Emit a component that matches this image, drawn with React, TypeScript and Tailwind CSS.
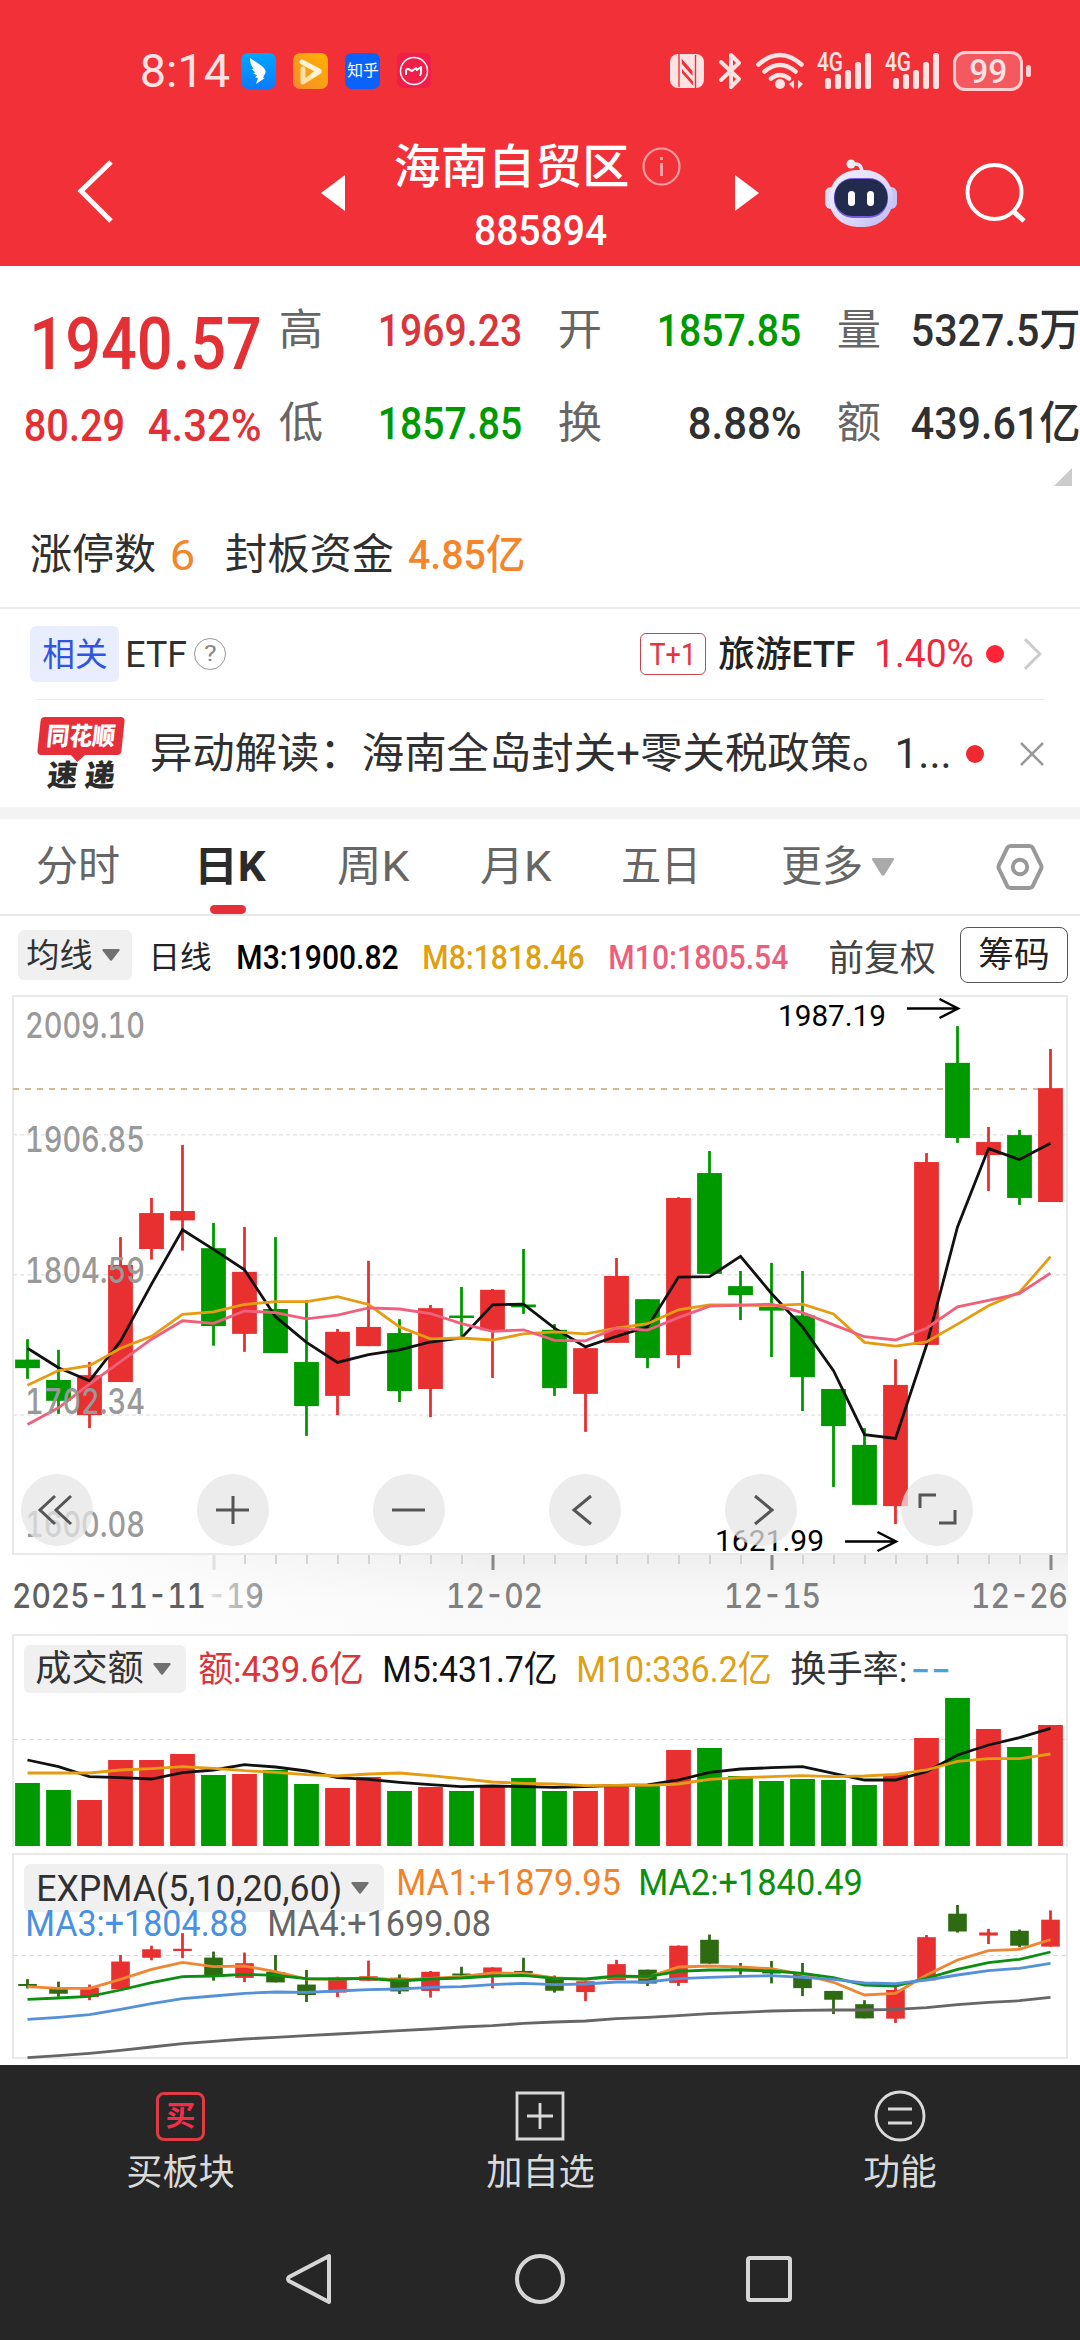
import React, { useLayoutEffect, useRef, useState } from 'react';
import clsx from 'clsx';

const RED = '#e83030';
const GREEN = '#009900';

// [high, body top, body bottom, low, is rising], measured down from the plot origin
type Candle = [number, number, number, number, boolean];

const candles: Candle[] = [
  [880, 930, 951, 977, false],
  [906, 980, 1031, 1063, false],
  [936, 968, 1066, 1098, true],
  [630, 698, 985, 985, true],
  [534, 571, 659, 685, true],
  [404, 566, 589, 663, true],
  [595, 657, 848, 896, false],
  [605, 715, 867, 911, true],
  [630, 806, 914, 914, false],
  [785, 936, 1044, 1117, false],
  [855, 862, 1019, 1066, true],
  [688, 850, 897, 897, true],
  [831, 865, 1007, 1034, false],
  [796, 804, 1002, 1071, true],
  [752, 822, 828, 873, false],
  [757, 759, 858, 975, true],
  [659, 795, 802, 818, false],
  [843, 857, 1000, 1019, false],
  [902, 902, 1014, 1107, true],
  [681, 725, 889, 889, true],
  [782, 782, 926, 951, false],
  [532, 534, 919, 951, true],
  [419, 473, 720, 720, false],
  [713, 750, 772, 833, false],
  [693, 801, 810, 924, false],
  [713, 822, 973, 1056, false],
  [1002, 1002, 1093, 1242, false],
  [1098, 1139, 1286, 1286, false],
  [929, 992, 1289, 1333, true],
  [424, 446, 894, 894, true],
  [113, 203, 387, 399, false],
  [360, 397, 429, 517, true],
  [367, 380, 534, 551, false],
  [169, 265, 544, 544, true],
];

const ma3 = [902, 950, 982, 885, 745, 612, 660, 710, 825, 888, 937, 918, 906, 887, 877, 796, 794, 853, 899, 873, 850, 728, 727, 677, 768, 850, 957, 1114, 1123, 895, 605, 413, 440, 400];
const ma8 = [993, 957, 945, 902, 873, 819, 813, 795, 788, 788, 776, 795, 850, 879, 877, 882, 867, 862, 867, 853, 842, 808, 796, 796, 798, 794, 818, 888, 897, 887, 843, 798, 765, 678];
const ma10 = [1089, 1048, 990, 935, 880, 835, 841, 811, 815, 830, 821, 803, 806, 817, 842, 861, 857, 883, 884, 852, 858, 827, 799, 797, 794, 815, 845, 874, 882, 853, 801, 785, 768, 718];

const volumes = [489, 510, 540, 420, 420, 402, 465, 462, 450, 492, 504, 471, 513, 501, 513, 500, 474, 513, 513, 493, 495, 390, 384, 468, 483, 477, 480, 495, 462, 354, 234, 327, 381, 315];
const vol5 = [420, 440, 470, 473, 477, 458, 450, 434, 441, 453, 473, 478, 487, 494, 500, 498, 500, 502, 500, 496, 495, 480, 457, 447, 443, 440, 460, 480, 480, 455, 405, 375, 353, 325];
const vol10 = [459, 459, 459, 450, 446, 440, 445, 452, 457, 464, 468, 462, 459, 467, 476, 486, 490, 492, 497, 496, 496, 492, 478, 473, 470, 467, 470, 468, 463, 450, 424, 416, 416, 402];

const exp5 = [1100, 1105, 1105, 1078, 1048, 1027, 1040, 1038, 1055, 1077, 1077, 1074, 1080, 1075, 1070, 1059, 1060, 1074, 1078, 1070, 1072, 1041, 1038, 1041, 1046, 1063, 1087, 1125, 1120, 1065, 1020, 992, 988, 959];
const exp10 = [1138, 1134, 1129, 1110, 1088, 1070, 1068, 1063, 1066, 1076, 1077, 1075, 1083, 1077, 1074, 1068, 1066, 1075, 1077, 1068, 1070, 1054, 1050, 1050, 1053, 1060, 1073, 1095, 1098, 1075, 1048, 1028, 1018, 996];
const exp20 = [1198, 1192, 1184, 1168, 1151, 1136, 1128, 1120, 1116, 1117, 1113, 1109, 1107, 1102, 1100, 1094, 1090, 1094, 1092, 1086, 1086, 1076, 1072, 1069, 1067, 1072, 1078, 1089, 1091, 1080, 1065, 1052, 1045, 1030];
const exp60 = [1313, 1307, 1300, 1291, 1281, 1271, 1264, 1257, 1252, 1247, 1242, 1237, 1232, 1227, 1221, 1217, 1210, 1206, 1203, 1196, 1192, 1187, 1181, 1177, 1173, 1171, 1170, 1170, 1168, 1163, 1154, 1147, 1142, 1132];

const slotX = (i: number) => 27.5 + i * 31;
const priceY = (v: number) => 980 + v / 2.45;
const lowerY = (v: number) => 1620 + v / 3;
const miniY = (v: number) => lowerY(822.2 + v * 0.29);

const points = (values: number[], scale: (v: number) => number) =>
  values.map((v, i) => `${slotX(i)},${scale(v).toFixed(1)}`).join(' ');

// Squeezes or stretches one line of text so that its ink fills `w` pixels
function Fit({ w, className, children }: { w: number; className?: string; children: string }) {
  const ref = useRef<HTMLSpanElement>(null);
  const [fit, setFit] = useState({ scale: 1, inset: 0 });

  useLayoutEffect(() => {
    const el = ref.current;
    if (!el) return;
    const inset = parseFloat(getComputedStyle(el).fontSize) * 0.05;
    setFit({ scale: (w + inset * 2) / el.offsetWidth, inset });
  }, [w, children]);

  return (
    <span className={clsx('block shrink-0 whitespace-nowrap leading-none', className)} style={{ width: w }}>
      <span
        ref={ref}
        className="inline-block origin-left"
        style={{ transform: `translateX(${-fit.inset}px) scaleX(${fit.scale})` }}
      >
        {children}
      </span>
    </span>
  );
}

function Caret({ className }: { className?: string }) {
  return (
    <svg viewBox="0 0 18 12" className={clsx('h-3 w-[18px] shrink-0', className)} fill="currentColor">
      <path d="M1 0h16q1 .6.5 1.5L10 11.3q-1 1-2 0L.5 1.500Q0 .6 1 0z" />
    </svg>
  );
}

function Signal() {
  return (
    <svg viewBox="0 0 54 44" className="h-11 w-[54px] shrink-0">
      <text x="0" y="22" className="font-medium" fontSize="25" textLength="26" lengthAdjust="spacingAndGlyphs" fill="#ffe3e3">4G</text>
      {[29, 25, 21, 13, 4].map((top, i) => (
        <rect key={top} x={8 + i * 10} y={top} width="6" height={40 - top} rx="2.500" fill="#ffe3e3" />
      ))}
    </svg>
  );
}

function StatusBar() {
  return (
    <div className="flex h-[141px] items-center text-[#ffe3e3]">
      <Fit w={86} className="ml-[142px] text-[47px]">8:14</Fit>
      <div className="ml-[13px] flex gap-[17px]">
        <svg viewBox="0 0 35 36" className="h-9 w-[35px]">
          <defs>
            <linearGradient id="ding" x1="0" y1="0" x2="0" y2="1">
              <stop offset="0" stopColor="#00a6ff" />
              <stop offset="1" stopColor="#0a7bff" />
            </linearGradient>
          </defs>
          <rect width="35" height="36" rx="7" fill="url(#ding)" />
          <path d="M9 5c4 3 10 6 13 9 2 2 3 4 2.500 5.500L22 25l1.500.3-8.500 5.700 2-6-3-.5 2-2-4-2.500 2.500-.5-4-3.500 2-.3C10 12.500 9 9 9 5z" fill="#fff" />
        </svg>
        <svg viewBox="0 0 35 36" className="h-9 w-[35px]">
          <defs>
            <linearGradient id="play" x1="0" y1="1" x2="1" y2="0">
              <stop offset="0" stopColor="#f58a2c" />
              <stop offset="1" stopColor="#ffb300" />
            </linearGradient>
          </defs>
          <rect width="35" height="36" rx="7" fill="url(#play)" />
          <path d="M10 16v13l16-10" fill="none" stroke="#ffe2a6" strokeWidth="5" strokeLinecap="round" strokeLinejoin="round" />
          <path d="M9 9l17 9-6 4" fill="none" stroke="#fff3d6" strokeWidth="5" strokeLinecap="round" strokeLinejoin="round" />
        </svg>
        <div className="flex h-9 w-[35px] items-center justify-center rounded-[7px] bg-[#0a62fb] text-white">
          <Fit w={30} className="text-[16px]">知乎</Fit>
        </div>
        <svg viewBox="0 0 35 36" className="h-9 w-[35px]">
          <rect width="34" height="35" rx="6" fill="#f01e48" />
          <circle cx="17" cy="18" r="13.500" fill="none" stroke="#fff" strokeWidth="1.500" />
          <path d="M9 22v-5q2-2 4 0l2 1 4-3 1 2 4-3v6l-1 3" fill="none" stroke="#fff" strokeWidth="2" strokeLinejoin="round" />
        </svg>
      </div>

      <svg viewBox="0 0 34 36" className="ml-[238px] h-9 w-[34px] shrink-0">
        <rect y="1" width="34" height="34" rx="8" fill="#ffe3e3" />
        <path d="M9 1v33M25.500 2v33" fill="none" stroke="#f13038" strokeWidth="1.400" />
        <path d="M11.500 5.500L22.500 18v5L12 11zM12 16l11 12.500v4L12 20z" fill="#f13038" />
      </svg>
      <svg viewBox="0 0 24 38" className="ml-[14px] h-[38px] w-6 shrink-0" fill="none" stroke="#ffe3e3" strokeWidth="4" strokeLinecap="round" strokeLinejoin="round">
        <path d="M3 10l18 17-8 8V3l8 8L3 28" />
      </svg>
      <svg viewBox="0 0 48 38" className="ml-[14px] h-[38px] w-12 shrink-0" fill="none" stroke="#ffe3e3" strokeWidth="4.500" strokeLinecap="round">
        <path d="M2.500 12.500q21.500-19 43 0M8.500 19.500q15.500-13 31 0M15 26.500q9-7 18 0" />
        <circle cx="24" cy="32" r="5" fill="#ffe3e3" stroke="none" />
        <path d="M38 28v9l-5-5zM42 28l5 4-5 5z" fill="#ffe3e3" stroke="none" />
      </svg>
      <div className="ml-[13px] flex gap-[14px]">
        <Signal />
        <Signal />
      </div>
      <div className="ml-[14px] flex h-10 w-[70px] shrink-0 items-center justify-center rounded-[12px] border-[3px] border-[#ffd0d2] bg-[#f4595f]">
        <Fit w={35} className="text-[34px] font-medium">99</Fit>
      </div>
      <div className="ml-[3px] h-3 w-[5px] rounded-full bg-[#ffd0d2]" />
    </div>
  );
}

function Robot() {
  return (
    <svg viewBox="0 0 72 68" className="h-[68px] w-[72px]">
      <defs>
        <linearGradient id="shell" x1="0" y1="0" x2="1" y2="1">
          <stop offset="0" stopColor="#f4f0ff" />
          <stop offset=".6" stopColor="#dcd8fb" />
          <stop offset="1" stopColor="#b9b6f2" />
        </linearGradient>
      </defs>
      <path d="M26 6q10-4 11 7" fill="none" stroke="#e6e4fa" strokeWidth="3.500" />
      <circle cx="26" cy="5" r="4.500" fill="#e6f2f5" />
      <rect x="0" y="28" width="12" height="22" rx="6" fill="#d9dbf3" />
      <rect x="60" y="28" width="12" height="22" rx="6" fill="#c8c5f5" />
      <rect x="4" y="11" width="64" height="57" rx="28" fill="url(#shell)" />
      <rect x="9" y="19" width="54" height="40" rx="19" fill="#7a5ce0" />
      <rect x="9.500" y="20" width="53" height="37" rx="18" fill="#222b4d" />
      <rect x="23" y="32" width="7" height="15" rx="3.500" fill="#fff" />
      <rect x="42" y="32" width="7" height="15" rx="3.500" fill="#fff" />
    </svg>
  );
}

function TitleBar() {
  return (
    <div className="flex h-[125px] items-start text-white">
      <div className="flex h-[103px] items-center">
        <svg viewBox="0 0 42 66" className="ml-[74px] h-[66px] w-[42px]" fill="none" stroke="#fff" strokeWidth="5">
          <path d="M37 2L7 31l30 30" />
        </svg>
        <svg viewBox="0 0 24 36" className="ml-[205px] h-9 w-6" fill="#fff">
          <path d="M24 0v36L0 18z" />
        </svg>
      </div>
      <div className="ml-[51px] w-[285px]">
        <div className="flex h-[50px] items-center gap-[15px]">
          <Fit w={231} className="text-[47px] font-medium">海南自贸区</Fit>
          <svg viewBox="0 0 39 39" className="h-[39px] w-[39px]" fill="none" stroke="#ff9ea2" strokeWidth="2.200">
            <circle cx="19.500" cy="19.500" r="18" />
            <path d="M19.500 16v13M19.500 10v3" strokeWidth="3" />
          </svg>
        </div>
        <Fit w={129} className="mt-[19px] ml-20 text-[42px] font-medium">885894</Fit>
      </div>
      <div className="flex h-[103px] items-center">
        <svg viewBox="0 0 24 36" className="ml-[54px] h-9 w-6" fill="#fff">
          <path d="M0 0v36l24-18z" />
        </svg>
        <div className="ml-[66px]"><Robot /></div>
        <svg viewBox="0 0 64 64" className="ml-[67px] h-16 w-16" fill="none" stroke="#fff" strokeWidth="4">
          <circle cx="30.500" cy="31" r="27" />
          <path d="M49 50l11 10" strokeWidth="5" />
        </svg>
      </div>
    </div>
  );
}

function Stat({ label, value, w, className }: { label: string; value: string; w: number; className: string }) {
  return (
    <div className="flex h-12 items-center justify-between">
      <Fit w={40} className="text-[43px] text-[#666]">{label}</Fit>
      <Fit w={w} className={clsx('text-[45px] font-medium', className)}>{value}</Fit>
    </div>
  );
}

function Quote() {
  return (
    <div className="h-[343px] border-b-2 border-[#ececec] bg-white">
      <div className="flex h-[181px] pl-[26px]">
        <div className="w-[255px] pt-[46px] text-[#e33035]">
          <div className="flex h-16 items-center pl-[7px]">
            <Fit w={225} className="text-[73px] font-medium">1940.57</Fit>
          </div>
          <div className="mt-[27px] flex h-[45px] items-center gap-[27px]">
            <Fit w={97} className="text-[45px] font-medium">80.29</Fit>
            <Fit w={109} className="text-[45px] font-medium">4.32%</Fit>
          </div>
        </div>
        <div className="flex gap-10 pt-10">
          <div className="flex w-[239px] flex-col gap-[45px]">
            <Stat label="高" value="1969.23" w={140} className="text-[#d9363c]" />
            <Stat label="低" value="1857.85" w={140} className="text-[#009900]" />
          </div>
          <div className="flex w-[239px] flex-col gap-[45px]">
            <Stat label="开" value="1857.85" w={140} className="text-[#009900]" />
            <Stat label="换" value="8.88%" w={109} className="text-[#303030]" />
          </div>
          <div className="flex w-[239px] flex-col gap-[45px]">
            <Stat label="量" value="5327.5万" w={165} className="text-[#303030]" />
            <Stat label="额" value="439.61亿" w={165} className="text-[#303030]" />
          </div>
        </div>
      </div>
      <div className="mt-[21px] flex justify-end pr-2">
        <svg viewBox="0 0 18 18" className="h-[18px] w-[18px]" fill="#ccc">
          <path d="M18 0v18H0z" />
        </svg>
      </div>
      <div className="mt-[39px] flex h-[60px] items-center pl-8 text-[42px] text-[#303030]">
        <Fit w={122}>涨停数</Fit>
        <Fit w={21} className="ml-[18px] text-[43px] text-[#f5852a]">6</Fit>
        <Fit w={165} className="ml-[34px]">封板资金</Fit>
        <Fit w={113} className="ml-[18px] text-[41px] font-medium text-[#f5852a]">4.85亿</Fit>
      </div>
    </div>
  );
}

function EtfRow() {
  return (
    <div className="mr-[37px] ml-[30px] flex h-[90px] items-center">
      <div className="flex h-[56px] w-[90px] items-center justify-center rounded-md bg-[#e9eefe]">
        <Fit w={62} className="text-[33px] text-[#2f55e0]">相关</Fit>
      </div>
      <Fit w={58} className="ml-2 pt-[2px] text-[36px] text-[#303030]">ETF</Fit>
      <div className="ml-[9px] flex h-8 w-8 items-center justify-center rounded-full border-[1.5px] border-[#999] text-[#888]">
        <Fit w={10} className="text-[22px]">?</Fit>
      </div>
      <div className="ml-[414px] flex h-[42px] w-[67px] items-center justify-center rounded-md border-[1.5px] border-[#c9454b] text-[#e5353f]">
        <Fit w={44} className="text-[31px]">T+1</Fit>
      </div>
      <Fit w={133} className="ml-[14px] pt-[2px] text-[36px] font-medium text-[#222]">旅游ETF</Fit>
      <Fit w={96} className="ml-[23px] text-[38px] text-[#f0283c]">1.40%</Fit>
      <div className="ml-[14px] h-[18px] w-[18px] shrink-0 rounded-full bg-[#ff2436]" />
      <svg viewBox="0 0 20 34" className="ml-[19px] h-[34px] w-5" fill="none" stroke="#ccc" strokeWidth="3">
        <path d="M2 2l15 15L2 32" />
      </svg>
    </div>
  );
}

function NewsRow() {
  return (
    <div className="mr-[36px] ml-[37px] flex h-[108px] items-center border-t border-[#e8e8e8]">
      <div className="flex w-[88px] flex-col items-center">
        <div className="relative flex h-[38px] w-[84px] -skew-x-6 items-center justify-center rounded bg-[#e5303a] text-white">
          <Fit w={66} className="text-[25px] font-black">同花顺</Fit>
          <div className="absolute -bottom-[5px] left-[36px] h-[10px] w-[10px] rotate-45 bg-[#e5303a]" />
        </div>
        <div className="mt-[6px] -skew-x-6 text-[#2c2c2c]">
          <Fit w={64} className="text-[30px] font-black">速 递</Fit>
        </div>
      </div>
      <Fit w={798} className="ml-[27px] text-[42px] text-[#303030]">异动解读：海南全岛封关+零关税政策。1...</Fit>
      <div className="ml-4 h-[18px] w-[18px] shrink-0 rounded-full bg-[#ee2a30]" />
      <svg viewBox="0 0 24 24" className="ml-[36px] h-6 w-6" fill="none" stroke="#999" strokeWidth="2.500">
        <path d="M1 1l22 22M23 1L1 23" />
      </svg>
    </div>
  );
}

function Tabs() {
  return (
    <div className="flex h-[97px] items-center border-b-2 border-[#e8e8e8] pt-px pl-[38px] text-[42px] text-[#666]">
      <Fit w={80}>分时</Fit>
      <div className="relative ml-[78px] text-[#2b2b2b]">
        <Fit w={68} className="font-bold">日K</Fit>
        <div className="absolute top-[59px] left-[14px] h-[9px] w-9 rounded-full bg-[#e5303a]" />
      </div>
      <Fit w={68} className="ml-[75px]">周K</Fit>
      <Fit w={67} className="ml-[75px]">月K</Fit>
      <Fit w={76} className="ml-[74px]">五日</Fit>
      <Fit w={78} className="ml-[84px]">更多</Fit>
      <svg viewBox="0 0 22 18" className="ml-[11px] h-[18px] w-[22px]" fill="#aaa">
        <path d="M1 0h20q1.500.5.8 2L12.500 17q-1.500 1.500-3 0L.2 2Q-.5.500 1 0z" />
      </svg>
      <svg viewBox="0 0 48 48" className="ml-[102px] h-12 w-12" fill="none" stroke="#999" strokeWidth="4" strokeLinejoin="round">
        <path d="M14.500 3h19q2.200 0 3.200 1.800L45 22q1 2 0 4l-8.300 17.200Q35.700 45 33.500 45h-19q-2.200 0-3.200-1.800L3 26q-1-2 0-4l8.300-17.200Q12.300 3 14.500 3z" />
        <circle cx="24" cy="24" r="7.200" />
      </svg>
    </div>
  );
}

function MaLegend() {
  return (
    <div className="flex h-[74px] items-center pt-1 pl-[18px] text-[33px] font-medium">
      <div className="flex h-[50px] w-[114px] items-center gap-[11px] rounded-md bg-[#f0f0f0] pl-[10px]">
        <Fit w={63} className="font-normal text-[#333]">均线</Fit>
        <Caret className="text-[#707070]" />
      </div>
      <Fit w={60} className="ml-[18px] pt-1 text-[31px] font-normal text-[#222]">日线</Fit>
      <Fit w={159} className="ml-[28px] pt-[5px] text-black">M3:1900.82</Fit>
      <Fit w={159} className="ml-[27px] pt-[5px] text-[#e0a010]">M8:1818.46</Fit>
      <Fit w={177} className="ml-[27px] pt-[5px] text-[#ec5f7c]">M10:1805.54</Fit>
      <Fit w={104} className="ml-[43px] pt-2 text-[36px] font-normal text-[#444]">前复权</Fit>
      <div className="ml-[26px] flex h-[56px] w-[108px] items-center justify-center rounded-lg border-[1.5px] border-[#555]">
        <Fit w={68} className="pt-px text-[35px] font-normal text-[#222]">筹码</Fit>
      </div>
    </div>
  );
}

const axisLabels = [
  { text: '2009.10', y: 1038 },
  { text: '1906.85', y: 1151.5 },
  { text: '1804.59', y: 1282.5 },
  { text: '1702.34', y: 1414 },
  { text: '1600.08', y: 1537 },
];

const chartButtons = [
  'M34 22L19 36l15 14M50 22L35 36l15 14',
  'M19 36h33M36 22v28',
  'M19 36h33',
  'M42 22L25 36l17 14',
  'M30 22l17 14-17 14',
  'M19 34V21h16M38 49h16V36',
];

function KLine() {
  return (
    <div className="relative h-[644px]">
      <svg viewBox="0 990 1080 644" className="block h-[644px] w-full">
        <defs>
          <linearGradient id="axisShade" x1="0" y1="0" x2="0" y2="1">
            <stop offset="0" stopColor="#efefef" />
            <stop offset=".6" stopColor="#f9f9f9" />
            <stop offset="1" stopColor="#fafafa" />
          </linearGradient>
          <linearGradient id="axisFade" x1="0" y1="0" x2="1" y2="0">
            <stop offset="0" stopColor="#fff" />
            <stop offset="1" stopColor="#fff" stopOpacity="0" />
          </linearGradient>
          <linearGradient id="dateFade" x1="0" y1="0" x2="1" y2="0">
            <stop offset="0" stopColor="#e8e8e8" />
            <stop offset="1" stopColor="#909090" />
          </linearGradient>
        </defs>

        <rect x="13" y="1555" width="1055" height="79" fill="url(#axisShade)" />
        <rect x="13" y="1555" width="480" height="79" fill="url(#axisFade)" />
        <rect x="13" y="996" width="1054" height="558" fill="#fff" stroke="#e9e9e9" strokeWidth="2" />

        {[1134.7, 1274.7, 1415].map(y => (
          <line key={y} x1="13" x2="1067" y1={y} y2={y} stroke="#e6e6e6" strokeWidth="1.500" strokeDasharray="4 3" />
        ))}
        <line x1="13" x2="1067" y1="1089" y2="1089" stroke="#c9a26c" strokeWidth="1.500" strokeDasharray="6 6" />

        {candles.map(([high, top, bottom, low, up], i) => (
          <g key={i} fill={up ? RED : GREEN}>
            <rect x={slotX(i) - 1.4} y={priceY(high)} width="2.800" height={priceY(low) - priceY(high)} />
            <rect x={slotX(i) - 12.4} y={priceY(top)} width="24.800" height={priceY(bottom) - priceY(top)} />
          </g>
        ))}

        <g fill="none" strokeWidth="2.800">
          <polyline points={points(ma3, priceY)} stroke="#111" />
          <polyline points={points(ma8, priceY)} stroke="#e69c10" />
          <polyline points={points(ma10, priceY)} stroke="#f0607c" />
        </g>

        <g className="font-[Inter] font-medium tabular-nums" fontSize="35" fill="#999">
          {axisLabels.map(l => (
            <text key={l.text} x="25" y={l.y} textLength="120" lengthAdjust="spacingAndGlyphs">{l.text}</text>
          ))}
        </g>

        <g fontSize="30" fill="#000">
          <text x="778" y="1025.500" textLength="108" lengthAdjust="spacingAndGlyphs">1987.19</text>
          <text x="715" y="1550.500" textLength="109" lengthAdjust="spacingAndGlyphs">1621.99</text>
        </g>
        <g fill="none" stroke="#000" strokeWidth="2.500">
          <path d="M907 1008.500h50M939.500 999l18.500 9.500-18.500 9.500" />
          <path d="M845 1541.500h50M877.500 1532l18.500 9.500-18.500 9.500" />
        </g>

        {candles.map((_, i) => {
          if (i < 6) return null;
          const major = i === 15 || i === 24 || i === 33;
          return (
            <line
              key={i}
              x1={slotX(i) + 0.5}
              x2={slotX(i) + 0.5}
              y1="1555"
              y2={major || i === 6 ? 1570 : 1564}
              stroke={major ? '#888' : i === 6 ? '#e0e0e0' : '#c8c8c8'}
              strokeWidth={major || i === 6 ? 3 : 1.5}
            />
          );
        })}

        <g className="font-[Inter] font-medium tabular-nums" fontSize="34" fill="#808080">
          <text x="12" y="1607.500" textLength="194" lengthAdjust="spacingAndGlyphs" fill="#606060">2025-11-11</text>
          <text x="207" y="1607.500" textLength="57" lengthAdjust="spacingAndGlyphs" fill="url(#dateFade)">-19</text>
          <text x="446" y="1607.500" textLength="97" lengthAdjust="spacingAndGlyphs">12-02</text>
          <text x="724" y="1607.500" textLength="97" lengthAdjust="spacingAndGlyphs">12-15</text>
          <text x="971" y="1607.500" textLength="97" lengthAdjust="spacingAndGlyphs">12-26</text>
        </g>
      </svg>

      <div className="absolute top-[484px] left-[21px] flex gap-[104px]">
        {chartButtons.map(d => (
          <button key={d} type="button" className="h-[72px] w-[72px] rounded-full bg-[#e6e6e6]/75">
            <svg viewBox="0 0 72 72" className="h-full w-full" fill="none" stroke="#555" strokeWidth="3">
              <path d={d} />
            </svg>
          </button>
        ))}
      </div>
    </div>
  );
}

function VolumePanel() {
  return (
    <div className="relative h-[219px]">
      <svg viewBox="0 1634 1080 219" className="absolute inset-0 h-[219px] w-full">
        <path d="M13 1847V1635h1054v212" fill="#fff" stroke="#e9e9e9" strokeWidth="2" />
        <line x1="13" x2="1067" y1="1739.500" y2="1739.500" stroke="#ddd" strokeDasharray="5 3" />
        {volumes.map((v, i) => (
          <rect key={i} x={slotX(i) - 12.4} y={lowerY(v)} width="24.800" height={1846 - lowerY(v)} fill={candles[i][4] ? RED : GREEN} />
        ))}
        <g fill="none" strokeWidth="2.800">
          <polyline points={points(vol5, lowerY)} stroke="#111" />
          <polyline points={points(vol10, lowerY)} stroke="#e69c10" />
        </g>
      </svg>
      <div className="relative flex h-[70px] items-center pl-6 text-[36px] font-medium">
        <div className="flex h-12 w-[162px] items-center gap-[11px] rounded-md bg-[#f0f0f0] pl-[13px]">
          <Fit w={105} className="font-normal text-[#333]">成交额</Fit>
          <Caret className="text-[#707070]" />
        </div>
        <Fit w={162} className="ml-[14px] pt-px font-normal text-[#d9363c]">额:439.6亿</Fit>
        <Fit w={172} className="ml-[22px] pt-px font-normal text-[#111]">M5:431.7亿</Fit>
        <Fit w={192} className="ml-[22px] pt-px font-normal text-[#e0a018]">M10:336.2亿</Fit>
        <Fit w={114} className="ml-[22px] pt-px font-normal text-[#333]">换手率:</Fit>
        <Fit w={37} className="ml-[6px] font-[Inter] text-[#4aa3d8]">--</Fit>
      </div>
    </div>
  );
}

function ExpmaPanel() {
  return (
    <div className="relative h-[212px]">
      <svg viewBox="0 1853 1080 212" className="absolute inset-0 h-[212px] w-full">
        <rect x="13" y="1854" width="1054" height="204" fill="#fff" stroke="#e9e9e9" strokeWidth="2" />
        <line x1="13" x2="1067" y1="1955.500" y2="1955.500" stroke="#ddd" strokeDasharray="5 3" />
      </svg>
      <div className="relative pt-[5px] pl-6 text-[37px]">
        <div className="flex h-[53px] items-start">
          <div className="mt-[6px] flex h-12 w-[360px] items-center gap-[11px] rounded-md bg-[#f0f0f0] pl-[14px]">
            <Fit w={302} className="pt-px text-[#303030]">EXPMA(5,10,20,60)</Fit>
            <Caret className="text-[#707070]" />
          </div>
          <Fit w={221} className="ml-[14px] pt-[6px] text-[#f0842c]">MA1:+1879.95</Fit>
          <Fit w={221} className="ml-[21px] pt-[6px] text-[#0a8f10]">MA2:+1840.49</Fit>
        </div>
        <div className="-mt-[6px] flex pl-[3px]">
          <Fit w={219} className="text-[#4a90e2]">MA3:+1804.88</Fit>
          <Fit w={220} className="ml-[23px] text-[#666]">MA4:+1699.08</Fit>
        </div>
      </div>
      <svg viewBox="0 1853 1080 212" className="absolute inset-0 h-[212px] w-full">
        {candles.map(([high, top, bottom, low, up], i) => (
          <g key={i} fill={up ? RED : '#2d6a12'}>
            <rect x={slotX(i) - 1.4} y={miniY(high)} width="2.800" height={miniY(low) - miniY(high)} />
            <rect x={slotX(i) - 9.3} y={miniY(top)} width="18.600" height={Math.max(2, miniY(bottom) - miniY(top))} />
          </g>
        ))}
        <g fill="none" strokeWidth="2.800">
          <polyline points={points(exp5, lowerY)} stroke="#ef8633" />
          <polyline points={points(exp10, lowerY)} stroke="#0a8f10" />
          <polyline points={points(exp20, lowerY)} stroke="#5590da" />
          <polyline points={points(exp60, lowerY)} stroke="#666" />
        </g>
      </svg>
    </div>
  );
}

function BottomBar() {
  return (
    <div className="h-[275px] bg-[#262626] text-[#dadada]">
      <div className="grid grid-cols-3 pt-[25px] text-[36px]">
        <div className="flex flex-col items-center gap-[14px]">
          <div className="mt-[2px] flex h-[49px] w-[49px] items-center justify-center rounded-lg border-[3px] border-[#e03a44] text-[#f0304a]">
            <Fit w={27} className="text-[28px] font-bold">买</Fit>
          </div>
          <Fit w={105}>买板块</Fit>
        </div>
        <div className="flex flex-col items-center gap-[13px]">
          <svg viewBox="0 0 52 52" className="h-[52px] w-[52px]" fill="none" stroke="#dadada" strokeWidth="2.800">
            <path d="M3 3h46v46H3zM26 13v26M13 26h26" />
          </svg>
          <Fit w={105}>加自选</Fit>
        </div>
        <div className="flex flex-col items-center gap-[13px]">
          <svg viewBox="0 0 52 52" className="h-[52px] w-[52px]" fill="none" stroke="#dadada" strokeWidth="2.800">
            <circle cx="26" cy="26" r="24" />
            <path d="M14 19h24M14 33h24" />
          </svg>
          <Fit w={70}>功能</Fit>
        </div>
      </div>
      <div className="flex items-center pt-[62px] pl-[285px]">
        <svg viewBox="0 0 48 52" className="h-[52px] w-12" fill="none" stroke="#d6d6d6" strokeWidth="4" strokeLinejoin="round">
          <path d="M44 3v46L4 28q-2-2 0-4z" />
        </svg>
        <svg viewBox="0 0 52 52" className="ml-[181px] h-[52px] w-[52px]" fill="none" stroke="#d6d6d6" strokeWidth="4">
          <circle cx="26" cy="26" r="23" />
        </svg>
        <div className="ml-[180px] h-[46px] w-[46px] rounded border-4 border-[#d6d6d6]" />
      </div>
    </div>
  );
}

export default function App() {
  return (
    <div className="h-[2340px] w-[1080px] overflow-hidden bg-white font-[Roboto,'Noto_Sans_CJK_SC',sans-serif]">
      <div className="bg-[#f13038]">
        <StatusBar />
        <TitleBar />
      </div>
      <Quote />
      <EtfRow />
      <NewsRow />
      <div className="h-3 bg-[#f3f3f3]" />
      <Tabs />
      <MaLegend />
      <KLine />
      <VolumePanel />
      <ExpmaPanel />
      <BottomBar />
    </div>
  );
}
